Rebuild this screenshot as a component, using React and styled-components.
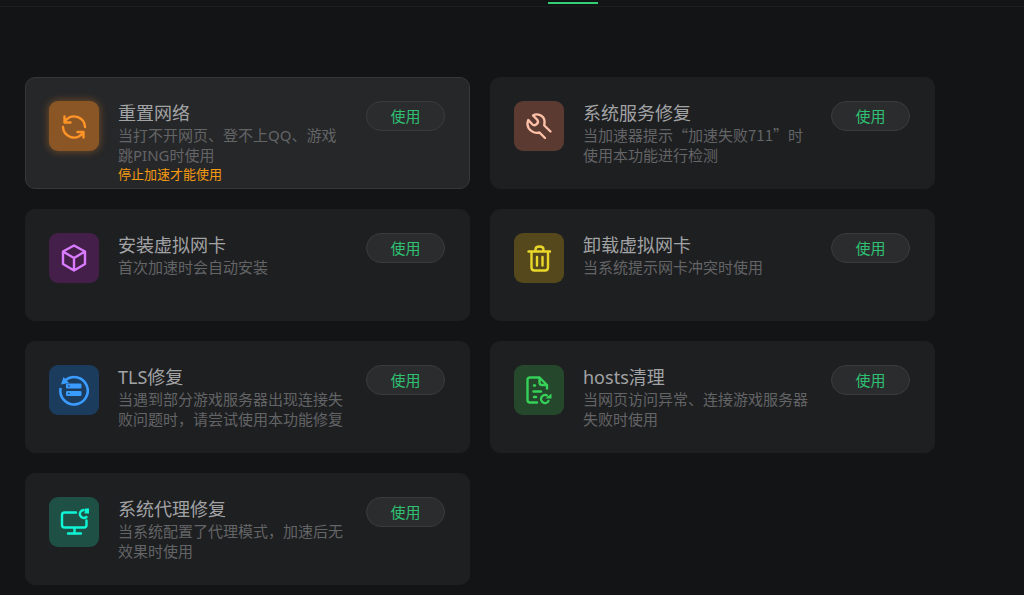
import React from 'react';
import styled, { createGlobalStyle } from 'styled-components'

const GlobalStyle = createGlobalStyle`
    * {
        box-sizing: border-box;
    }
    body {
        margin: 0;
        background: #131416;
        font-family: "Noto Sans", "Noto Sans CJK SC", sans-serif;
    }
`
const Header = styled.header`
    height: 7px;
    padding: 2px 0 0 548px;
    border-bottom: 1px solid #1d1e20;
`
const ActiveTab = styled.div`
    width: 50px;
    height: 2px;
    background: #33cf74;
`
const ToolGrid = styled.main`
    display: grid;
    grid-template-columns: 1fr 1fr;
    gap: 20px;
    padding: 70px 89px 10px 25px;
`
const Card = styled.section`
    display: flex;
    align-items: flex-start;
    min-height: 112px;
    padding: 23px 24px 0 23px;
    border: 1px solid ${props => props.$active ? "#363739" : "#1e1f21"};
    border-radius: 10px;
    background: ${props => props.$active ? "#262729" : "#1e1f21"};
`
const IconTile = styled.div`
    flex: none;
    width: 50px;
    height: 50px;
    border-radius: 9px;
    color: ${props => props.$color};
    background: ${props => props.$bg};
    box-shadow: ${props => props.$glow ? "0 0 8px rgba(255, 148, 39, 0.4)" : "none"};
`
const Drawing = styled.svg`
    display: block;
    fill: none;
    stroke: currentColor;
    stroke-width: 2.4;
    stroke-linecap: round;
    stroke-linejoin: round;
`
const Info = styled.div`
    flex: 1;
    min-width: 0;
    margin: 0 20px 0 19px;
`
const Title = styled.h2`
    margin: 0;
    font-size: 18px;
    font-weight: 400;
    line-height: 24px;
    color: #a2a3a5;
`
// fullWidth keeps curly quotes as wide as the Chinese characters around them
const Desc = styled.p`
    margin: 0;
    font-family: ${props => props.$fullWidth ? '"Noto Sans CJK SC", sans-serif' : "inherit"};
    font-size: 15px;
    font-weight: 400;
    line-height: 20px;
    color: #636466;
`
const Warning = styled.p`
    margin: 0;
    font-size: 13px;
    line-height: 18px;
    color: #f59a12;
`
const UseButton = styled.button`
    flex: none;
    width: 79px;
    height: 30px;
    padding: 0;
    border: 1px solid #3a3b3d;
    border-radius: 15px;
    background: #2b2c2e;
    color: #2fc072;
    font-family: inherit;
    font-size: 15px;
    line-height: 20px;
    cursor: pointer;
`

const icons = {
    reset: <>
        <path d="M36 26A11 11 0 0 0 17 19L15.500 21.500M15.500 15.500v6H21.500" />
        <path d="M14 26A11 11 0 0 0 33 33L34.500 31M34.500 36.500v-5.500H28.500" />
    </>,
    wrench: <path d="M31 37L25.500 31.500C20 33 14 29 13.500 23.500C13.300 21.500 13.600 20.500 14.300 19L18.500 23.500C20.500 25.500 25.500 22.500 23.500 19L19 14.500C23 12 30 14 30.500 20C30.600 22 30.300 23.500 30.300 24.500L36.500 30.500" />,
    cube: <path d="M25 12.500L36 18.500V31L25 37.500L14 31V18.500ZM14 18.500L25 25L36 18.500M25 25V37.500" />,
    trash: <>
        <path d="M14.500 18.500H36M21.500 18V16.500Q21.500 13.500 25.500 13.500T29.500 16.500V18" />
        <path d="M17.500 19V34.500Q17.500 37.500 20.500 37.500H31Q34 37.500 34 34.500V19M23 24V32.500M28.500 24V32.500" />
    </>,
    tls: <>
        <path d="M11.600 23A13.700 13.700 0 1 0 16.500 15" strokeWidth="2.600" strokeLinecap="butt" />
        <path d="M14.500 12L20 18L12 19.500Z" fill="currentColor" stroke="none" />
        <rect x="17" y="18.500" width="15.500" height="5" rx="1.200" fill="currentColor" stroke="none" />
        <rect x="17" y="26" width="15.500" height="5" rx="1.200" fill="currentColor" stroke="none" />
        <path d="M19.800 21h0.200M19.800 28.500h0.200" stroke="#1c3c5e" strokeWidth="1.600" />
    </>,
    hosts: <>
        <path d="M23 37.500H16Q13.500 37.500 13.500 35V15Q13.500 12.500 16 12.500H25.500L33 20V23.500M25.500 12.500V17.500Q25.500 20 28 20H33" />
        <path d="M20 20.500H21M19.500 26.500H27M20 32H22" />
        <path d="M34.500 36A4 4 0 1 1 33 30.500" />
        <path d="M37.500 28.500V33.500H31.500Z" fill="currentColor" stroke="none" />
    </>,
    proxy: <>
        <path d="M27 15.500H15.500Q13 15.500 13 18V28Q13 30.500 15.500 30.500H35Q37.500 30.500 37.500 28V23.500M25.500 30.500V36M19 36.500H32" />
        <path d="M37.500 20A4 4 0 1 1 34.500 13" />
        <path d="M36 11.500H40V16.500H35.500Z" fill="currentColor" stroke="none" />
    </>,
}

const tools = [
    { id: "reset", color: "#ff9427", bg: "#8b5626", title: "重置网络", desc: "当打不开网页、登不上QQ、游戏跳PING时使用", warning: "停止加速才能使用", active: true },
    { id: "wrench", color: "#ffc0a8", bg: "#5a3a31", title: "系统服务修复", desc: "当加速器提示“加速失败711”时使用本功能进行检测", fullWidth: true },
    { id: "cube", color: "#d97bff", bg: "#431f49", title: "安装虚拟网卡", desc: "首次加速时会自动安装" },
    { id: "trash", color: "#ead72a", bg: "#55481c", title: "卸载虚拟网卡", desc: "当系统提示网卡冲突时使用" },
    { id: "tls", color: "#3b9cff", bg: "#1c3c5e", title: "TLS修复", desc: "当遇到部分游戏服务器出现连接失败问题时，请尝试使用本功能修复" },
    { id: "hosts", color: "#35d158", bg: "#25482c", title: "hosts清理", desc: "当网页访问异常、连接游戏服务器失败时使用" },
    { id: "proxy", color: "#10f5d5", bg: "#1f5045", title: "系统代理修复", desc: "当系统配置了代理模式，加速后无效果时使用" },
]

function ToolCard({ tool })
{
    return(
        <Card $active={tool.active}>
            <IconTile $color={tool.color} $bg={tool.bg} $glow={tool.active}>
                <Drawing width="50" height="50" viewBox="0 0 50 50" aria-hidden="true">{icons[tool.id]}</Drawing>
            </IconTile>
            <Info>
                <Title id={tool.id}>{tool.title}</Title>
                <Desc $fullWidth={tool.fullWidth}>{tool.desc}</Desc>
                {tool.warning && <Warning>{tool.warning}</Warning>}
            </Info>
            <UseButton type="button" aria-describedby={tool.id}>使用</UseButton>
        </Card>
    );
}

function App()
{
    return(
        <div lang="zh-CN">
            <GlobalStyle />
            <Header><ActiveTab /></Header>
            <ToolGrid>
                {tools.map(tool => <ToolCard key={tool.id} tool={tool} />)}
            </ToolGrid>
        </div>
    );
}

export default App;
